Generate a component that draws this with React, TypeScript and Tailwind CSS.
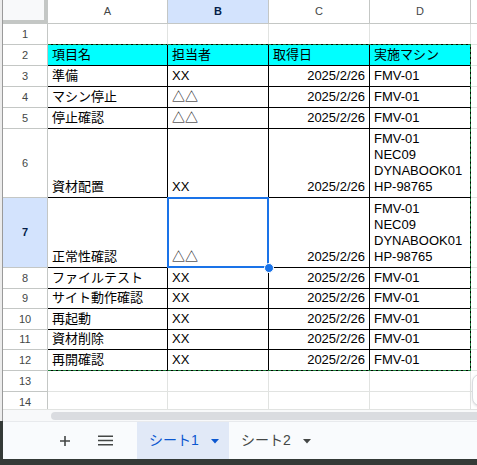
import React from 'react';

type Row = {
  n: number;
  h: string;
  cells?: [string, string, string, string[]];
  head?: boolean;
};

const rows: Row[] = [
  { n: 1, h: 'h-[21px]' },
  { n: 2, h: 'h-[21px]', head: true, cells: ['項目名', '担当者', '取得日', ['実施マシン']] },
  { n: 3, h: 'h-[21px]', cells: ['準備', 'XX', '2025/2/26', ['FMV-01']] },
  { n: 4, h: 'h-[21px]', cells: ['マシン停止', '△△', '2025/2/26', ['FMV-01']] },
  { n: 5, h: 'h-[21px]', cells: ['停止確認', '△△', '2025/2/26', ['FMV-01']] },
  { n: 6, h: 'h-[69px]', cells: ['資材配置', 'XX', '2025/2/26', ['FMV-01', 'NEC09', 'DYNABOOK01', 'HP-98765']] },
  { n: 7, h: 'h-[70px]', cells: ['正常性確認', '△△', '2025/2/26', ['FMV-01', 'NEC09', 'DYNABOOK01', 'HP-98765']] },
  { n: 8, h: 'h-[21px]', cells: ['ファイルテスト', 'XX', '2025/2/26', ['FMV-01']] },
  { n: 9, h: 'h-[20px]', cells: ['サイト動作確認', 'XX', '2025/2/26', ['FMV-01']] },
  { n: 10, h: 'h-[21px]', cells: ['再起動', 'XX', '2025/2/26', ['FMV-01']] },
  { n: 11, h: 'h-[20px]', cells: ['資材削除', 'XX', '2025/2/26', ['FMV-01']] },
  { n: 12, h: 'h-[21px]', cells: ['再開確認', 'XX', '2025/2/26', ['FMV-01']] },
  { n: 13, h: 'h-[21px]' },
  { n: 14, h: 'h-[21px]' },
];

const widths = ['w-[120px]', 'w-[101px]', 'w-[101px]', 'w-[101px]'];
const letters = ['A', 'B', 'C', 'D'];

function Caret({ color }: { color: string }) {
  return (
    <svg width="8" height="5" viewBox="0 0 8 5" className="ml-[12px] mt-[2px]">
      <path d="M0 0h8L4 4.5z" fill={color} />
    </svg>
  );
}

function DataCell({ row, col }: { row: Row; col: number }) {
  const c = row.cells;
  const border = c ? 'border-black' : 'border-[#e1e3e1]';
  const bottom = row.n === 1 ? 'border-b-black' : '';
  const bg = row.head ? 'bg-[#00ffff]' : 'bg-white';
  const selected = row.n === 7 && col === 1;
  let content: React.ReactNode = null;
  if (c) {
    if (col === 3) {
      content = (
        <div className="flex flex-col">
          {c[3].map((l) => (
            <span key={l}>{l}</span>
          ))}
        </div>
      );
    } else {
      content = <span>{c[col] as string}</span>;
    }
  }
  const align = col === 2 && c && !row.head ? 'justify-end' : 'justify-start';
  return (
    <div
      className={`relative flex shrink-0 items-end whitespace-nowrap border-r border-b px-[4px] pb-[2px] text-[13px] leading-4 text-black ${
        selected ? '' : 'overflow-hidden'
      } ${widths[col]} ${border} ${bottom} ${bg} ${align}`}
    >
      {content}
      {selected && (
        <div className="absolute top-[-1px] left-[-1px] right-[-1px] bottom-[-1px] z-10 border-2 border-[#1a73e8]" />
      )}
    </div>
  );
}

export default function App() {
  return (
    <div
      className="flex h-[465px] w-[477px] overflow-hidden bg-[#343a37]"
      style={{ fontFamily: '"Liberation Sans", "Noto Sans CJK JP", sans-serif' }}
    >
      <div className="h-[421px] w-[3px] shrink-0 border-r border-[#9a9a9a] bg-[#ececec]" />
      <div className="flex min-w-0 flex-1 flex-col">
        <div className="relative h-[409px] overflow-hidden bg-white">
          {/* column headers */}
          <div className="flex h-[24px]">
            <div className="w-[45px] shrink-0 border-r-4 border-b-4 border-[#c4c7c5] bg-[#f8f9fa]" />
            {letters.map((l, i) => (
              <div
                key={l}
                className={`flex shrink-0 items-center justify-center border-r border-b border-[#c4c7c5] text-[11px] ${widths[i]} ${
                  i === 1 ? 'bg-[#d3e3fd] font-bold text-[#041e49]' : 'text-[#444746]'
                }`}
              >
                {l}
              </div>
            ))}
            <div className="flex-1 border-b border-[#c4c7c5]" />
          </div>
          {rows.map((r) => (
            <div key={r.n} className={`flex ${r.h}`}>
              <div
                className={`flex w-[45px] shrink-0 items-center justify-center border-r border-b border-[#c4c7c5] text-[11px] ${
                  r.n === 7 ? 'bg-[#d3e3fd] font-bold text-[#041e49]' : 'bg-white text-[#444746]'
                }`}
              >
                {r.n}
              </div>
              {[0, 1, 2, 3].map((i) => (
                <DataCell key={i} row={r} col={i} />
              ))}
              <div className="flex-1 border-b border-[#e1e3e1]" />
            </div>
          ))}
          {/* copy marquee */}
          <div className="pointer-events-none absolute top-[44px] left-[45px] h-[327px] w-[423px] border border-l-0 border-dashed border-[#188038]" />
          {/* fill handle */}
          <div className="absolute top-[263px] left-[261px] z-20 h-[10px] w-[10px] rounded-full border border-white bg-[#1a73e8]" />
          {/* side panel toggle */}
          <div className="absolute top-[374px] left-[469px] h-[32px] w-[16px] rounded-l-[8px] border border-[#dadce0] bg-white shadow" />
        </div>
        {/* horizontal scrollbar */}
        <div className="flex h-[12px] items-center border-t border-[#e1e3e1] bg-[#f8f9fa] pl-[48px]">
          <div className="h-[8px] flex-1 rounded-l-full bg-[#dadce0]" />
        </div>
        {/* sheet tabs */}
        <div className="flex h-[38px] items-stretch border-t border-[#e8eaed] bg-[#f9fbfd]">
          <div className="ml-[52px] flex w-[20px] items-center justify-center">
            <svg width="12" height="12" viewBox="0 0 12 12">
              <path d="M6 1v10M1 6h10" stroke="#444746" strokeWidth="1.6" />
            </svg>
          </div>
          <div className="ml-[20px] flex w-[20px] items-center justify-center">
            <svg width="15" height="11" viewBox="0 0 15 11">
              <path d="M0 1.2h15M0 5.5h15M0 9.8h15" stroke="#444746" strokeWidth="1.6" />
            </svg>
          </div>
          <div className="ml-[22px] flex w-[92px] items-center bg-[#e1e9f7] pl-[12px] text-[14px] text-[#0b57d0]">
            <span>シート1</span>
            <Caret color="#0b57d0" />
          </div>
          <div className="flex items-center pl-[12px] text-[14px] text-[#444746]">
            <span>シート2</span>
            <Caret color="#444746" />
          </div>
        </div>
      </div>
    </div>
  );
}
